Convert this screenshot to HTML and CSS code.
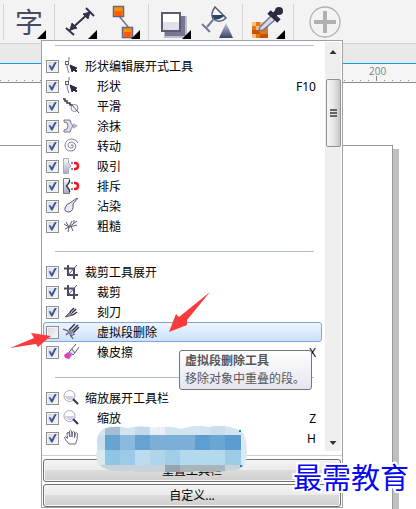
FILE: index.html
```html
<!DOCTYPE html>
<html lang="zh-CN">
<head>
  <meta charset="UTF-8" />
  <meta name="viewport" content="width=device-width, initial-scale=1" />
  <title>工具箱自定义</title>
  <link rel="stylesheet" href="styles.css">
</head>
<body>

<!-- Icones reutilizados no menu -->
<svg class="sprite" aria-hidden="true">
  <symbol id="i-shape" viewBox="0 0 18 18">
    <path d="M6 0v3Q2 8 6 16" fill="none" stroke="#77758f"/>
    <rect x="2.500" y="4.500" width="3" height="3" fill="#fff" stroke="#5c5a74"/>
    <path d="M7 8l7 3-2 1 2 2-1 1-2-2-2 2z" fill="#2c2b40" stroke="#2c2b40"/>
  </symbol>
  <symbol id="i-smooth" viewBox="0 0 18 18">
    <path d="M0 2h2v2h2v2h3v2h3" fill="none" stroke="#3a3850" stroke-width="1.500"/>
    <circle cx="11.500" cy="11" r="3.500" fill="#f4f5fa" stroke="#8c8aa4"/>
    <path d="M8 7l8 9" stroke="#5c5a74"/>
  </symbol>
  <symbol id="i-smear" viewBox="0 0 18 18">
    <path d="M1 3h6q1 4 3 6-2 2-3 6H1v-2q4 0 4-4T1 5z" fill="#dcdee9" stroke="#77758f"/>
    <path d="M10 6v6l5-3z" fill="#b0b2c6"/>
  </symbol>
  <symbol id="i-twirl" viewBox="0 0 18 18">
    <path d="M8 9q0-2 2-1 1 3-2 3-3 0-3-3 0-3 4-3 4 1 4 5-1 4-5 4-6 0-6-6Q3 2 9 2q4 0 6 4" fill="none" stroke="#85839a"/>
  </symbol>
  <symbol id="i-attract" viewBox="0 0 18 18">
    <path d="M0.500 1.500h5V6L8 9l-2.500 3v4.500h-5z" fill="url(#steel)" stroke="#a8aabf"/>
    <path d="M11 6h1q3 0 3 3t-3 3h-1" fill="none" stroke="#f01822" stroke-width="2.500"/>
    <path d="M8 5h2v2H8zM8 11h2v2H8z" fill="#8c8aa4"/>
  </symbol>
  <symbol id="i-repel" viewBox="0 0 18 18">
    <path d="M0.500 1.500h6V5l-3 4 3 4v3.500h-6z" fill="url(#steel)" stroke="#77798f"/>
    <path d="M6.500 3v2l-3 4 3 4v2" fill="none" stroke="#34324a" stroke-width="1.300"/>
    <path d="M11 6h1q3 0 3 3t-3 3h-1" fill="none" stroke="#f01822" stroke-width="2.500"/>
    <path d="M8 5h2v2H8zM8 11h2v2H8z" fill="#8c8aa4"/>
  </symbol>
  <symbol id="i-smudge" viewBox="0 0 18 18">
    <path d="M15 1l-5 6q1 7-4 8-5 0-4-4 2-5 5-5l7-5" fill="#e8eaf2" stroke="#5c5a74"/>
  </symbol>
  <symbol id="i-rough" viewBox="0 0 18 18">
    <path d="M1 7l5 3 3-6M2 12l4-2 8-6M6 10l-1 5M8 9l2 5M3 5l3 5 8-2M11 3v3" fill="none" stroke="#5c5a74"/>
  </symbol>
  <symbol id="i-crop" viewBox="0 0 18 18">
    <path d="M5 2v10h10M1 5.500h10V16" fill="none" stroke="#4c4a64" stroke-width="2"/>
    <path d="M6 11l8-9" stroke="#5c5a74"/>
  </symbol>
  <symbol id="i-knife" viewBox="0 0 18 18">
    <path d="M2 14l5-5 3 3z" fill="#8c8a9c" stroke="#5c5a74"/>
    <path d="M7 9l4-4M9 10l4-4M10 12l4-3" stroke="#34324a" stroke-width="1.500"/>
  </symbol>
  <symbol id="i-segment" viewBox="0 0 18 18">
    <path d="M0 6l5 2 5 8M3 12l4-4M7 13l5-2" fill="none" stroke="#5c5a74" stroke-width="1.300"/>
    <path d="M6 7l6-6M8 9l7-7M10 10l6-6" stroke="#34324a" stroke-width="1.500"/>
    <path d="M5 9l3 3 3-3-3-3z" fill="#8c8aa0"/>
  </symbol>
  <symbol id="i-eraser" viewBox="0 0 18 18">
    <path d="M7 8l6-7M11 11l5-7" stroke="#5c5a74"/>
    <path d="M6 9l3-3 3 4-2 2z" fill="#dcdde8" stroke="#66647c"/>
    <path d="M1 12l4-3 4 3-3 4-4-1z" fill="#d048bc"/>
  </symbol>
  <symbol id="i-zoom" viewBox="0 0 18 18">
    <circle cx="6.500" cy="7" r="5.500" fill="#fff" stroke="#a8a8b4"/>
    <path d="M2 7h9q-1 4-4.500 4T2 7z" fill="#cfd1e6"/>
    <path d="M10 10l5 5" stroke="#34324a" stroke-width="2"/>
  </symbol>
  <symbol id="i-hand" viewBox="0 0 18 18">
    <path d="M6 15Q3 12 1.500 8.500q1-2 3 1L4 4q1-1.500 2 0l1 4-.5-6q1-1.500 2 0L9 8l.5-5q1-1.500 2 0V9l1-5q1.500-1 2 .5 0 7-2 10.500z" fill="#fff" stroke="#6c6a84"/>
  </symbol>
  <defs>
    <linearGradient id="steel" x1="0" y1="0" x2="0" y2="1">
      <stop offset="0" stop-color="#fff"/><stop offset="1" stop-color="#a4a8be"/>
    </linearGradient>
    <linearGradient id="beam" x1="0" y1="0" x2="0" y2="1">
      <stop offset="0" stop-color="#c4c6d4"/><stop offset="1" stop-color="#38426c"/>
    </linearGradient>
  </defs>
</svg>

<header class="toolbar">
  <div class="tool-group">
    <button class="tool tool-text flyout" title="文本">字</button>
  </div>
  <div class="tool-group">
    <button class="tool flyout" title="度量">
      <svg viewBox="0 0 43 40"><g stroke="#34324a" stroke-width="2" fill="#34324a"><path d="M14 31L35 12M11 28l8 7M31 8l8 8"/><path d="M15 30l2-7 5 5zM35 12l-7 2 5 5z" stroke-width="1"/></g></svg>
    </button>
    <button class="tool flyout" title="连接器">
      <svg viewBox="0 0 43 40"><path d="M21 16l10 12" stroke="#75738e" stroke-width="1.500"/><g fill="#ff9000" stroke="#66648a" stroke-width="1.500"><rect x="15.500" y="6.500" width="10" height="10"/><rect x="24.500" y="27.500" width="10" height="10"/></g><path d="M17 11h7v5h-7zM26 32h7v5h-7z" fill="#ff5a00"/></svg>
    </button>
  </div>
  <div class="tool-group">
    <button class="tool flyout" title="阴影">
      <svg viewBox="0 0 43 40"><path d="M15 16h23v22H15z" fill="#bdbecb"/><path d="M16 16h20v20H16z" fill="#77778f"/><rect x="13" y="13" width="18" height="18" fill="#fff" stroke="#5c5a74" stroke-width="2"/><path d="M14 22h16v8H14z" fill="#dfe0e8"/></svg>
    </button>
    <button class="tool" title="透明度">
      <svg viewBox="0 0 43 40"><path d="M34 23l7 15H27z" fill="url(#beam)"/><path d="M23 7l11 11q-6 6-13 1-3-5 2-12z" fill="#f8f8fb" stroke="#5c5a74" stroke-width="1.500"/><path d="M20 15h13q-6 6-11 4z" fill="#26466c"/><path d="M21 20l-6 7M10 24l8 8" stroke="#77779a" stroke-width="2"/></svg>
    </button>
  </div>
  <div class="tool-group">
    <button class="tool flyout" title="颜色滴管">
      <svg viewBox="0 0 43 40"><path d="M9 22h16v16H9z" fill="#e07810"/><path d="M9 22h4v4H9zM17 22h4v4h-4zM13 26h4v4h-4zM9 34h4v4H9z" fill="#f8bc7c"/><path d="M9 30h8v4H9zM17 34h8v4h-8z" fill="#c85000"/><path d="M20 30l-4 1 1-4L29 15l4 4z" fill="#d8dbe8" stroke="#77779a" stroke-width="1.500"/><path d="M26 12l10 9M31 15l5-5" stroke="#2c2b40" stroke-width="5"/><circle cx="36" cy="11" r="4" fill="#2c2b40"/></svg>
    </button>
  </div>
  <button class="tool" title="添加">
    <svg viewBox="0 0 43 40"><circle cx="31" cy="22" r="15" fill="#f3f3f3" stroke="#b0b0b0" stroke-width="1.300"/><path d="M31 11v22M20 22h22" stroke="#b0b0b0" stroke-width="4"/></svg>
  </button>
</header>

<div class="doc-bar"></div>
<div class="ruler"><span class="ruler-label">200</span></div>
<main class="canvas"><div class="sheet"></div></main>

<section class="panel">
  <div class="panel-body">
    <div class="list">
      <div class="group">
        <label class="row head"><input type="checkbox" checked><svg><use href="#i-shape"/></svg><span>形状编辑展开式工具</span></label>
        <label class="row"><input type="checkbox" checked><svg><use href="#i-shape"/></svg><span>形状</span><kbd>F10</kbd></label>
        <label class="row"><input type="checkbox" checked><svg><use href="#i-smooth"/></svg><span>平滑</span></label>
        <label class="row"><input type="checkbox" checked><svg><use href="#i-smear"/></svg><span>涂抹</span></label>
        <label class="row"><input type="checkbox" checked><svg><use href="#i-twirl"/></svg><span>转动</span></label>
        <label class="row"><input type="checkbox" checked><svg><use href="#i-attract"/></svg><span>吸引</span></label>
        <label class="row"><input type="checkbox" checked><svg><use href="#i-repel"/></svg><span>排斥</span></label>
        <label class="row"><input type="checkbox" checked><svg><use href="#i-smudge"/></svg><span>沾染</span></label>
        <label class="row"><input type="checkbox" checked><svg><use href="#i-rough"/></svg><span>粗糙</span></label>
      </div>
      <div class="group">
        <label class="row head"><input type="checkbox" checked><svg><use href="#i-crop"/></svg><span>裁剪工具展开</span></label>
        <label class="row"><input type="checkbox" checked><svg><use href="#i-crop"/></svg><span>裁剪</span></label>
        <label class="row"><input type="checkbox" checked><svg><use href="#i-knife"/></svg><span>刻刀</span></label>
        <label class="row active"><input type="checkbox"><svg><use href="#i-segment"/></svg><span>虚拟段删除</span></label>
        <label class="row"><input type="checkbox" checked><svg><use href="#i-eraser"/></svg><span>橡皮擦</span><kbd>X</kbd></label>
      </div>
      <div class="group">
        <label class="row head"><input type="checkbox" checked><svg><use href="#i-zoom"/></svg><span>缩放展开工具栏</span></label>
        <label class="row"><input type="checkbox" checked><svg><use href="#i-zoom"/></svg><span>缩放</span><kbd>Z</kbd></label>
        <label class="row"><input type="checkbox" checked><svg><use href="#i-hand"/></svg><kbd>H</kbd></label>
      </div>
    </div>
    <div class="scrollbar">
      <span class="arrow-up"></span>
      <div class="thumb"><i></i><i></i><i></i></div>
      <span class="arrow-down"></span>
    </div>
  </div>
  <div class="panel-footer">
    <button class="btn">重置工具栏</button>
    <button class="btn">自定义...</button>
  </div>
</section>

<div class="tooltip">
  <strong>虚拟段删除工具</strong>
  <p>移除对象中重叠的段。</p>
</div>

<!-- Mosaico sobre o item da mão -->
<svg class="mosaic" viewBox="0 0 152 46" aria-hidden="true">
  <defs><clipPath id="blob"><path d="M8 3q12-4 24-1 14-3 28 0 14-3 26 1 14-5 28-2 16-3 28 2 8 3 9 12 2 10 0 20-2 8-10 9-20 3-40 1-16 3-30 1-18 2-36-1-16 2-26-3-8-4-8-14 2-5 1-10-1-9 6-15z"/></clipPath></defs>
  <g clip-path="url(#blob)">
    <path d="M0 0h152v9H0z" fill="#d3e4f1"/><path d="M10 0h15v9H10z" fill="#a6bed3"/><path d="M40 0h15v9H40z" fill="#c5d9ea"/><path d="M55 0h15v9H55z" fill="#e8f0f7"/><path d="M115 0h15v9h-15z" fill="#c8deef"/>
    <path d="M0 9h10v15H0z" fill="#c9deee"/><path d="M10 9h15v15H10z" fill="#68a4d2"/><path d="M25 9h15v15H25z" fill="#8bb8dd"/><path d="M40 9h15v15H40z" fill="#66a2d2"/><path d="M55 9h45v15H55z" fill="#7cafd8"/><path d="M100 9h15v15h-15z" fill="#5d9dd0"/><path d="M115 9h15v15h-15z" fill="#6aa6d3"/><path d="M130 9h16v15h-16z" fill="#5c9ccf"/><path d="M146 9h6v30h-6z" fill="#dbe9f4"/>
    <path d="M0 24h10v15H0z" fill="#dce9f1"/><path d="M10 24h15v15H10z" fill="#90c5e6"/><path d="M25 24h15v15H25z" fill="#9ccbe9"/><path d="M40 24h15v15H40z" fill="#bbdcef"/><path d="M55 24h15v15H55z" fill="#b0d5eb"/><path d="M70 24h15v15H70z" fill="#a1cde8"/><path d="M85 24h45v15H85z" fill="#b4d8ec"/><path d="M130 24h16v15h-16z" fill="#9ccae7"/>
    <path d="M0 39h152v7H0z" fill="#c7d2d9"/><path d="M70 39h15v7H70z" fill="#96a4ae"/><path d="M85 39h45v7H85z" fill="#a9b4bb"/>
  </g>
  <path d="M144 4h2v2h-2zM145 39h2v2h-2z" fill="#1c84c4"/>
</svg>

<!-- Setas vermelhas -->
<svg class="pointer pointer-left" viewBox="0 0 41 15" aria-hidden="true"><path d="M0 15L24 5 21 0 41 3 28 14 26 11z" fill="#fb3b3b"/></svg>
<svg class="pointer pointer-right" viewBox="0 0 41 40" aria-hidden="true"><path d="M0 40L7 22l3 3L41 0 18 28v5z" fill="#fb3b3b"/></svg>

<div class="watermark">最需教育</div>

</body>
</html>
```
FILE: styles.css
```css
* { box-sizing: border-box; margin: 0; padding: 0; }
body {
  font-family: "Noto Sans", "Noto Sans CJK SC", sans-serif;
  font-size: 12px;
  color: #000;
  background: #fff;
  min-height: 100vh;
  display: flex;
  flex-direction: column;
  position: relative;
  overflow: hidden;
}
.sprite {
  position: absolute;
  width: 0;
  height: 0;
}

/* Barra de ferramentas */
.toolbar {
  display: flex;
  height: 44px;
  padding-left: 3px;
  background: #f3f3f3;
  border-bottom: 1px solid #d2d2d2;
}
.tool-group {
  display: flex;
  padding-right: 7px;
}
.tool-group::before, .tool-group + .tool::before {
  content: "";
  width: 1px;
  height: 36px;
  margin-top: 4px;
  background: #d4d4d4;
}
.tool {
  display: flex;
  width: 43px;
  height: 40px;
  border: none;
  background: none;
  position: relative;
}
.tool-group + .tool {
  width: 44px;
}
.tool svg {
  flex: none;
  width: 43px;
  height: 40px;
  overflow: visible;
}
.tool-text {
  padding-left: 11px;
  font: 28px/43px "Noto Sans CJK SC", sans-serif;
  color: #4c4a60;
}
.flyout::after {
  content: "";
  position: absolute;
  right: 1px;
  bottom: 1px;
  width: 9px;
  height: 9px;
  background: #000;
  clip-path: polygon(100% 0, 100% 100%, 0 100%);
}
.doc-bar {
  height: 20px;
  background: #e9e9e9;
  border-bottom: 1px solid #0c9ee8;
}
.ruler {
  height: 19px;
  padding-left: 369px;
  border-bottom: 1px solid #8a8a8a;
  background:
    linear-gradient(#888, #888) 376px 12px / 1px 5px no-repeat,
    repeating-linear-gradient(to right, #888 0 1px, transparent 1px 8px) 0 16px / 100% 1px no-repeat,
    #f5f5f5;
}
.ruler-label {
  display: block;
  font: 10px/14px "Open Sans", sans-serif;
  color: #808080;
}
.canvas {
  flex: 1;
  display: flex;
  padding: 62px 23px 0 0;
}
.sheet {
  flex: 1;
  border: solid #999;
  border-width: 1px 1px 0 0;
  box-shadow: 6px 4px 0 #c0c0c0;
}

/* Painel suspenso */
.panel {
  position: absolute;
  left: 41px;
  top: 40px;
  width: 302px;
  background: #fff;
  border: 1px solid #a0a0a0;
}
.panel-body {
  display: flex;
  padding: 0 1px;
}
.list {
  flex: 1;
  padding-bottom: 7px;
}
.group::before {
  content: "";
  display: block;
  height: 1px;
  margin: 4px 8px 10px 12px;
  background: #b3bbda;
}
.group + .group::before {
  margin-top: 15px;
}
.row {
  display: flex;
  align-items: center;
  gap: 4px;
  height: 20px;
  padding: 0 5px 0 2px;
  border: 1px solid transparent;
  border-radius: 3px;
  line-height: 20px;
}
.row svg {
  width: 18px;
  height: 18px;
}
.row span {
  margin-left: 12px;
  padding-top: 1px;
}
.row.head span {
  margin-left: 0;
}
.row kbd {
  margin-left: auto;
  padding-top: 1px;
  font: inherit;
}
.row.active {
  border-color: #7da7d9;
  background: linear-gradient(#eef5fe, #cbe2fd);
}
.row input {
  appearance: none;
  width: 13px;
  height: 13px;
  border: 1px solid #8e8f8f;
  background: linear-gradient(135deg, #d4d8de, #f8f8f8);
  box-shadow: inset 0 0 0 1px #f4f4f4;
}
.row input:checked::after {
  content: "";
  display: block;
  width: 9px;
  height: 9px;
  margin: 1px;
  background: #3f589c;
  clip-path: polygon(8% 45%, 25% 40%, 42% 65%, 78% 0, 100% 0, 50% 100%, 35% 100%);
}
.scrollbar {
  display: flex;
  flex-direction: column;
  align-items: center;
  width: 16px;
  margin: 1px 0 4px 3px;
  background: #efefef;
}
.arrow-up, .arrow-down {
  width: 7px;
  height: 4px;
  background: #333;
}
.arrow-up {
  margin: 8px 0 25px;
  clip-path: polygon(50% 0, 100% 100%, 0 100%);
}
.arrow-down {
  margin: auto 0 6px;
  clip-path: polygon(0 0, 100% 0, 50% 100%);
}
.thumb {
  display: flex;
  flex-direction: column;
  justify-content: center;
  align-items: center;
  gap: 1px;
  width: 15px;
  height: 68px;
  border: 1px solid #929292;
  border-radius: 2px;
  background: linear-gradient(to right, #f6f6f6, #e6e6e6 50%, #c6c6c6);
}
.thumb i {
  width: 7px;
  height: 2px;
  background: #666;
}
.panel-footer {
  display: flex;
  flex-direction: column;
  gap: 2px;
  padding: 3px 1px 0;
  border-top: 1px solid #d0d0d0;
}
.btn {
  height: 23px;
  border: 1px solid #707070;
  border-radius: 3px;
  background: linear-gradient(#f2f2f2, #ebebeb 50%, #dcdcdc 50%, #cfcfcf);
  box-shadow: inset 0 0 0 1px #f8f8f8;
  font: inherit;
  line-height: 20px;
}

/* Camadas por cima do painel */
.tooltip {
  position: absolute;
  left: 179px;
  top: 350px;
  padding: 1px 6px 1px 5px;
  border: 1px solid #767676;
  border-radius: 3px;
  background: linear-gradient(#fff, #e4e5f0);
  color: #575757;
  line-height: 18px;
}
.mosaic {
  position: absolute;
  left: 95px;
  top: 426px;
  width: 152px;
  height: 46px;
}
.pointer {
  position: absolute;
  width: 41px;
}
.pointer-left {
  left: 10px;
  top: 333px;
  height: 15px;
}
.pointer-right {
  left: 169px;
  top: 292px;
  height: 40px;
}
.watermark {
  position: absolute;
  right: 7px;
  top: 456px;
  font: 29px/40px "KaiTi", "Noto Sans CJK SC", sans-serif;
  color: #0808f0;
  -webkit-text-stroke: 4px #fff;
  paint-order: stroke fill;
}
```
